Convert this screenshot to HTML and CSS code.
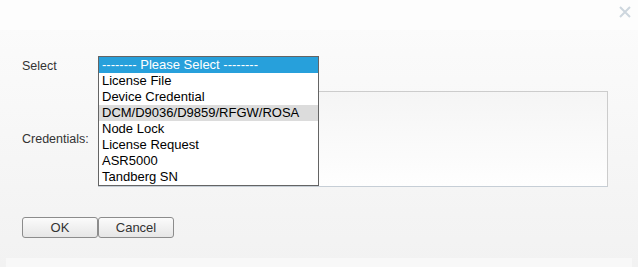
FILE: index.html
```html
<!DOCTYPE html>
<html>
<head>
    <meta charset="UTF-8">
    <title>Add Credentials</title>
    <link rel="stylesheet" href="styles.css">
</head>
<body>
    <div class="dialog">
        <div class="dialog-header">
            <svg class="close" width="12" height="12" viewBox="0 0 12 12">
                <path d="M1 1 L11 11 M11 1 L1 11" stroke="#cdd6de" stroke-width="2" fill="none"/>
            </svg>
        </div>

        <div class="form">
            <div class="row row-select">
                <div class="label">Select</div>
                <div class="select-wrap">
                    <div class="select-closed"></div>
                    <div class="listbox">
                        <div class="option selected">-------- Please Select --------</div>
                        <div class="option">License File</div>
                        <div class="option">Device Credential</div>
                        <div class="option hover">DCM/D9036/D9859/RFGW/ROSA</div>
                        <div class="option">Node Lock</div>
                        <div class="option">License Request</div>
                        <div class="option">ASR5000</div>
                        <div class="option">Tandberg SN</div>
                    </div>
                </div>
            </div>

            <div class="row row-cred">
                <div class="label">Credentials:</div>
                <div class="textarea"></div>
            </div>

            <div class="buttons">
                <button class="button">OK</button>
                <button class="button">Cancel</button>
            </div>
        </div>

        <div class="footer-strip"></div>
    </div>
</body>
</html>
```

FILE: styles.css
```css
body {
    margin: 0;
    font-family: "Liberation Sans", Arial, sans-serif;
    font-size: 13px;
    color: #333333;
    background-color: #f2f2f2;
}
.dialog {
    width: 638px;
    height: 267px;
    overflow: hidden;
    background: linear-gradient(#fcfcfc, #f2f2f2);
}
.dialog-header {
    height: 30px;
    background-color: #fdfdfd;
    display: flex;
    justify-content: flex-end;
    align-items: flex-start;
    box-sizing: border-box;
    padding: 6px 7px 0 0;
}
.close {
    display: block;
}
.form {
    padding: 26px 0 0 22px;
}
.row {
    display: flex;
}
.label {
    width: 76px;
    flex: none;
    font-size: 12.5px;
}
.row-select {
    height: 35px;
    align-items: flex-start;
}
.row-select .label {
    padding-top: 3px;
}
.select-wrap {
    position: relative;
    width: 221px;
    height: 20px;
}
.select-closed {
    height: 20px;
    border: 1px solid #a0a0a0;
    box-sizing: border-box;
}
.listbox {
    position: absolute;
    top: 0;
    left: 0;
    width: 221px;
    box-sizing: border-box;
    border: 1px solid #646464;
    background-color: #ffffff;
    z-index: 2;
}
.option {
    height: 16px;
    line-height: 16px;
    padding-left: 3px;
    color: #000000;
    white-space: nowrap;
}
.option.selected {
    background-color: #27a0db;
    color: #ffffff;
}
.option.hover {
    background-color: #dcdcdc;
}
.row-cred {
    align-items: center;
}
.textarea {
    width: 510px;
    height: 96px;
    box-sizing: border-box;
    border: 1px solid #cccccc;
    border-bottom-color: #c6ced6;
    background: linear-gradient(#f5f5f5, #fefefe);
}
.buttons {
    display: flex;
    margin-top: 30px;
}
.button {
    width: 76px;
    height: 21px;
    margin: 0;
    padding: 0;
    font-family: "Liberation Sans", Arial, sans-serif;
    font-size: 13px;
    color: #333333;
    border: 1px solid #8c8c8c;
    border-radius: 3px;
    background: linear-gradient(#fbfbfb, #e6e6e6);
}
.footer-strip {
    margin: 20px 0 0 6px;
    width: 626px;
    height: 9px;
    background-color: #f8f8f8;
}
```
